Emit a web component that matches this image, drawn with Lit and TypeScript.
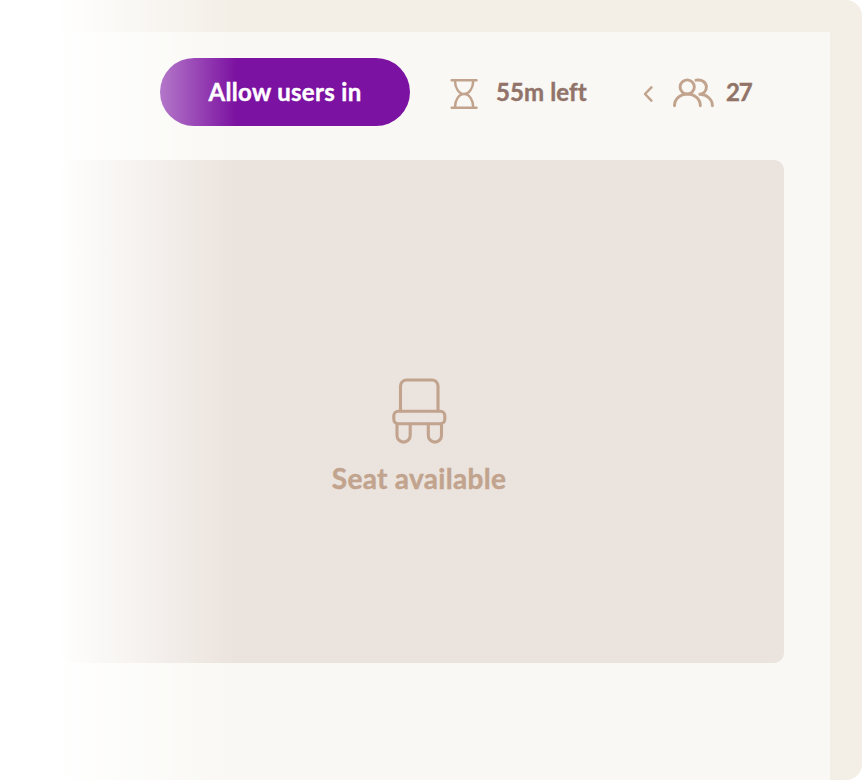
import { LitElement, html, css } from "lit";
import { customElement } from "lit/decorators.js";

@customElement("app-root")
export class AppRoot extends LitElement {
  static styles = css`
    :host {
      display: block;
      position: relative;
      width: 862px;
      height: 780px;
      overflow: hidden;
      background: #fff;
      font-family: Lato, "Open Sans", sans-serif;
      font-weight: 700;
      font-variant-ligatures: none;
      -webkit-text-stroke: 0.4px currentColor;
    }
    .frame {
      box-sizing: border-box;
      height: 780px;
      padding: 32px 32px 0 0;
      background: #f3eee6;
      border-radius: 0 16px 16px 0;
    }
    .panel {
      box-sizing: border-box;
      height: 748px;
      padding: 26px 46px 0 62px;
      background: #f9f8f4;
      border-bottom-right-radius: 2px;
    }
    .bar {
      display: flex;
      align-items: center;
      height: 68px;
      padding-left: 98px;
      color: #917369;
      font-size: 24px;
      white-space: nowrap;
    }
    .allow {
      width: 250px;
      height: 68px;
      padding: 0 0 2px;
      border: 0;
      border-radius: 34px;
      background: #7c12a1;
      color: #fff;
      font: inherit;
      font-variant-ligatures: none;
      -webkit-text-stroke: inherit;
      letter-spacing: 0.32px;
    }
    .icon {
      display: block;
      flex: none;
      fill: none;
      stroke: #c1a38e;
      stroke-width: 2.5;
      stroke-linecap: round;
      stroke-linejoin: round;
    }
    .glass {
      margin-left: 40px;
    }
    .time {
      width: 90px;
      margin-left: 18px;
      padding-bottom: 2px;
      letter-spacing: 0.1px;
    }
    .chevron {
      margin-left: 56px;
    }
    .people {
      margin-left: 18px;
      stroke-width: 2.9;
    }
    .count {
      margin-left: 11px;
      padding-bottom: 2px;
      letter-spacing: -1.2px;
    }
    .seat {
      display: flex;
      flex-direction: column;
      align-items: center;
      box-sizing: border-box;
      height: 503px;
      margin-top: 34px;
      padding: 217px 8px 0 0;
      border-radius: 10px;
      background: #ebe3dd;
      color: #c1a38e;
      font-size: 28px;
      line-height: 34px;
      letter-spacing: 0.3px;
    }
    .chair {
      stroke-width: 3.1;
    }
    .label {
      margin-top: 16px;
    }
    .fade {
      position: absolute;
      inset: 0 auto 0 0;
      width: 236px;
      background: linear-gradient(to right, #fff 58px, rgba(255, 255, 255, 0) 236px);
      pointer-events: none;
    }
  `;

  render() {
    return html`
      <div class="frame">
        <main class="panel">
          <header class="bar">
            <button class="allow">Allow users in</button>
            <svg class="icon glass" width="28" height="36" viewBox="450 74 28 36">
              <path d="M451.7 80.2h24.8M451.7 107.8h24.8M455 81c0 7 4 13 9.1 13s9.1-6 9.1-13M455 107c0-7 4-13 9.1-13s9.1 6 9.1 13" />
            </svg>
            <span class="time">55m left</span>
            <svg class="icon chevron" width="12" height="36" viewBox="642 74 12 36">
              <path d="M651.4 87.4l-6.4 6.6 6.4 6.6" />
            </svg>
            <svg class="icon people" width="43" height="36" viewBox="672 74 43 36">
              <circle cx="687.2" cy="87" r="7.1" />
              <path d="M674.5 105.700c0-6.500 5.600-11.700 12.900-11.700s12.900 5.200 12.900 11.700M696 80.200c6-1.200 10.400 2.300 10.400 6.800 0 4-2.900 6.800-6.600 7.300 7.200.3 12.600 5 12.600 11.400" />
            </svg>
            <span class="count">27</span>
          </header>
          <section class="seat">
            <svg class="icon chair" width="56" height="68" viewBox="391 377 56 68">
              <path d="M400.500 411v-25a6 6 0 0 1 6-6h25.500a6 6 0 0 1 6 6v25" />
              <rect x="393.800" y="411.200" width="51" height="12.600" rx="4.500" />
              <path d="M397 424v11.500a6.500 6.500 0 0 0 13.200 0V424M428.300 424v11.500a6.500 6.500 0 0 0 13.200 0V424" />
            </svg>
            <span class="label">Seat available</span>
          </section>
        </main>
      </div>
      <div class="fade"></div>
    `;
  }
}
